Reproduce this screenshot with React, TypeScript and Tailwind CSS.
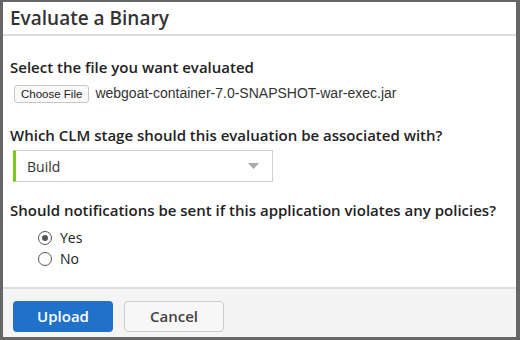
import { useState } from 'react';

export default function App() {
  const [notify, setNotify] = useState('yes');

  return (
    <div className="w-[520px] h-[340px] bg-[#666666] pt-[2px] pl-[3px] pr-[4px] pb-[3px]" style={{ fontFamily: '"Open Sans", sans-serif' }}>
      <div className="flex h-full flex-col bg-white">
        {/* Header */}
        <div className="h-[34px] shrink-0 border-b-2 border-[#dddddd] px-[7px] pt-[3px]">
          <h2 className="text-[19px] font-semibold leading-[26px] text-[#333333]">Evaluate a Binary</h2>
        </div>

        {/* Body */}
        <div className="flex-1 px-[7px] pt-[21px]">
          <p className="whitespace-nowrap text-[15px] font-semibold leading-[20px] text-[#222222]">Select the file you want evaluated</p>
          <div className="mt-[6px] flex items-center gap-[6px]" style={{ fontFamily: '"Liberation Sans", sans-serif' }}>
            <button className="ml-[4px] h-[18px] rounded-[3px] border border-[#c8c8c8] bg-[#fafafa] px-[6px] text-[11.5px] leading-[16px] text-[#222222]">Choose File</button>
            <span className="text-[14px] text-[#333333]">webgoat-container-7.0-SNAPSHOT-war-exec.jar</span>
          </div>

          <p className="mt-[21px] whitespace-nowrap text-[15px] font-semibold leading-[20px] text-[#222222]">Which CLM stage should this evaluation be associated with?</p>
          <div className="mt-[5px] ml-[3px] flex h-[32px] w-[260px] items-center justify-between border border-l-[3px] border-[#d0d0d0] border-l-[#7cc91b] pl-[11px] pr-[13px]">
            <span className="text-[14px] text-[#333333]">Build</span>
            <svg width="11" height="6" viewBox="0 0 11 6"><path d="M0 0h11L5.5 6z" fill="#aaaaaa" /></svg>
          </div>

          <p className="mt-[18px] whitespace-nowrap text-[15px] font-semibold leading-[20px] text-[#222222]">Should notifications be sent if this application violates any policies?</p>
          <div className="mt-[9px] ml-[28px] flex flex-col gap-[4px]">
            {[
              { v: 'yes', label: 'Yes' },
              { v: 'no', label: 'No' },
            ].map((o) => (
              <label key={o.v} className="flex h-[17px] cursor-pointer items-center gap-[8px] text-[14px] text-[#222222]" onClick={() => setNotify(o.v)}>
                <span className="flex h-[14px] w-[14px] items-center justify-center rounded-full border border-[#555555] bg-white">
                  {notify === o.v && <span className="h-[6px] w-[6px] rounded-full bg-[#555555]" />}
                </span>
                {o.label}
              </label>
            ))}
          </div>
        </div>

        {/* Footer */}
        <div className="flex h-[50px] shrink-0 items-start gap-[11px] border-t-2 border-[#dddddd] bg-[#f4f4f4] pl-[10px] pt-[12px]">
          <button className="h-[31px] w-[100px] rounded-[4px] bg-[#1f72c8] text-[15px] font-semibold text-white">Upload</button>
          <button className="h-[31px] w-[100px] rounded-[4px] border border-[#cccccc] bg-[#f7f7f7] text-[15px] font-semibold text-[#444444]">Cancel</button>
        </div>
      </div>
    </div>
  );
}
